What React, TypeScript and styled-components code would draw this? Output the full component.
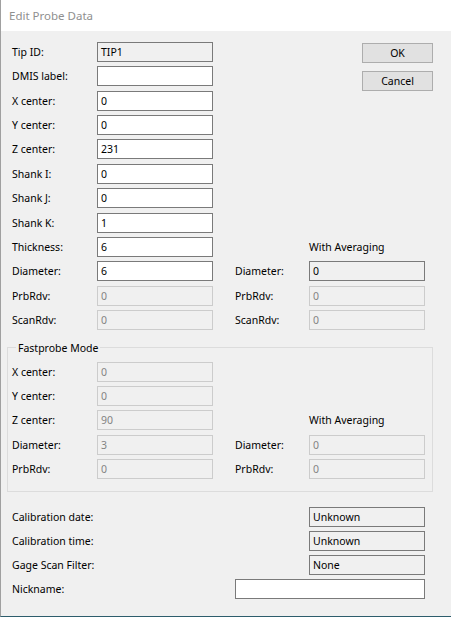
import styled, { createGlobalStyle } from "styled-components";

const GlobalStyle = createGlobalStyle`
  html, body {
    margin: 0;
    padding: 0;
    background: #f0f0f0;
  }
  * {
    box-sizing: border-box;
  }
`;

type Field = { label: string; value: string; kind: "edit" | "readonly" | "disabled" };

const mainFields: Field[] = [
  { label: "Tip ID:", value: "TIP1", kind: "readonly" },
  { label: "DMIS label:", value: "", kind: "edit" },
  { label: "X center:", value: "0", kind: "edit" },
  { label: "Y center:", value: "0", kind: "edit" },
  { label: "Z center:", value: "231", kind: "edit" },
  { label: "Shank I:", value: "0", kind: "edit" },
  { label: "Shank J:", value: "0", kind: "edit" },
  { label: "Shank K:", value: "1", kind: "edit" },
  { label: "Thickness:", value: "6", kind: "edit" },
  { label: "Diameter:", value: "6", kind: "edit" },
  { label: "PrbRdv:", value: "0", kind: "disabled" },
  { label: "ScanRdv:", value: "0", kind: "disabled" },
];

const averaging: Field[] = [
  { label: "Diameter:", value: "0", kind: "readonly" },
  { label: "PrbRdv:", value: "0", kind: "disabled" },
  { label: "ScanRdv:", value: "0", kind: "disabled" },
];

const fastFields: Field[] = [
  { label: "X center:", value: "0", kind: "disabled" },
  { label: "Y center:", value: "0", kind: "disabled" },
  { label: "Z center:", value: "90", kind: "disabled" },
  { label: "Diameter:", value: "3", kind: "disabled" },
  { label: "PrbRdv:", value: "0", kind: "disabled" },
];

const fastAveraging: Field[] = [
  { label: "Diameter:", value: "0", kind: "disabled" },
  { label: "PrbRdv:", value: "0", kind: "disabled" },
];

const calibration = [
  { label: "Calibration date:", value: "Unknown" },
  { label: "Calibration time:", value: "Unknown" },
  { label: "Gage Scan Filter:", value: "None" },
];

const App = () => {
  return (
    <>
      <GlobalStyle />
      <Window>
        <TitleBar>Edit Probe Data</TitleBar>
        <Body>
          <TopGrid>
            {mainFields.map((f, i) => (
              <Row key={f.label + i} $row={i + 1}>
                <Label $col="1">{f.label}</Label>
                <Box $kind={f.kind} $col="2">
                  {f.value}
                </Box>
              </Row>
            ))}
            <Heading $row={9} $col="5 / 7">
              With Averaging
            </Heading>
            {averaging.map((f, i) => (
              <Row key={"avg" + i} $row={i + 10}>
                <Label $col="4">{f.label}</Label>
                <Box $kind={f.kind} $col="5 / 7">
                  {f.value}
                </Box>
              </Row>
            ))}
            <ButtonColumn>
              <Button>OK</Button>
              <Button>Cancel</Button>
            </ButtonColumn>
          </TopGrid>

          <Group>
            <Legend>Fastprobe Mode</Legend>
            <GroupGrid>
              {fastFields.map((f, i) => (
                <Row key={"fast" + i} $row={i + 1}>
                  <Label $col="1">{f.label}</Label>
                  <Box $kind={f.kind} $col="2">
                    {f.value}
                  </Box>
                </Row>
              ))}
              <Heading $row={3} $col="5">
                With Averaging
              </Heading>
              {fastAveraging.map((f, i) => (
                <Row key={"fastavg" + i} $row={i + 4}>
                  <Label $col="4">{f.label}</Label>
                  <Box $kind={f.kind} $col="5">
                    {f.value}
                  </Box>
                </Row>
              ))}
            </GroupGrid>
          </Group>

          <BottomGrid>
            {calibration.map((c, i) => (
              <Row key={c.label} $row={i + 1}>
                <Label $col="1 / 4">{c.label}</Label>
                <Box $kind="readonly" $col="5">
                  {c.value}
                </Box>
              </Row>
            ))}
            <Row $row={4}>
              <Label $col="1 / 4">Nickname:</Label>
              <Box $kind="edit" $col="4 / 6" />
            </Row>
          </BottomGrid>
        </Body>
      </Window>
    </>
  );
};

const Window = styled.div`
  width: 451px;
  height: 617px;
  background: #f0f0f0;
  border-left: 1px solid #a0a0a0;
  border-bottom: 1px solid #2d5d6c;
  font-family: "Noto Sans", "Liberation Sans", sans-serif;
  font-size: 10.5px;
  color: #000;
  overflow: hidden;
`;

const TitleBar = styled.div`
  height: 31px;
  background: #fff;
  color: #8f8f8f;
  font-size: 11.5px;
  padding-left: 8px;
  display: flex;
  align-items: center;
`;

const Body = styled.div`
  padding: 11px 0 0 6px;
`;

const TopGrid = styled.div`
  display: grid;
  margin-left: 5px;
  grid-template-columns: 85px 116px 22px 74px 53px 63px 8px;
  grid-template-rows: repeat(12, 20px);
  row-gap: 4.36px;
`;

const Row = styled.div<{ $row: number }>`
  display: contents;

  & > * {
    grid-row: ${(p) => p.$row};
  }
`;

const Label = styled.div<{ $col: string }>`
  grid-column: ${(p) => p.$col};
  display: flex;
  align-items: center;
  white-space: nowrap;
`;

const Heading = styled.div<{ $row: number; $col: string }>`
  grid-row: ${(p) => p.$row};
  grid-column: ${(p) => p.$col};
  display: flex;
  align-items: center;
`;

const boxColors = {
  edit: { bg: "#fff", border: "#7a7a7a", color: "#000" },
  readonly: { bg: "#f0f0f0", border: "#7a7a7a", color: "#000" },
  disabled: { bg: "#f0f0f0", border: "#cccccc", color: "#838383" },
};

const Box = styled.div<{ $kind: Field["kind"]; $col: string }>`
  grid-column: ${(p) => p.$col};
  height: 20px;
  border: 1px solid ${(p) => boxColors[p.$kind].border};
  background: ${(p) => boxColors[p.$kind].bg};
  color: ${(p) => boxColors[p.$kind].color};
  display: flex;
  align-items: center;
  padding-left: 3px;
  white-space: nowrap;
`;

const ButtonColumn = styled.div`
  grid-column: 6 / 8;
  grid-row: 1 / 4;
  display: flex;
  flex-direction: column;
  gap: 8px;
  padding-top: 1px;
`;

const Button = styled.button`
  height: 20px;
  width: 71px;
  margin: 0;
  padding: 0;
  background: #e1e1e1;
  border: 1px solid #adadad;
  font-family: inherit;
  font-size: 10.5px;
  color: #000;
`;

const Group = styled.fieldset`
  width: 426px;
  margin: 11px 0 0 0;
  padding: 7px 0 12px 4px;
  border: 1px solid #dcdcdc;
  min-width: 0;
`;

const Legend = styled.legend`
  margin-left: 4px;
  padding: 0 2px;
  line-height: 14px;
`;

const GroupGrid = styled.div`
  display: grid;
  grid-template-columns: 85px 116px 22px 74px 116px;
  grid-template-rows: repeat(5, 20px);
  row-gap: 4.25px;
`;

const BottomGrid = styled.div`
  display: grid;
  margin: 15px 0 0 5px;
  grid-template-columns: 85px 116px 22px 74px 116px;
  grid-template-rows: repeat(4, 20px);
  row-gap: 4px;
`;

export default App;
